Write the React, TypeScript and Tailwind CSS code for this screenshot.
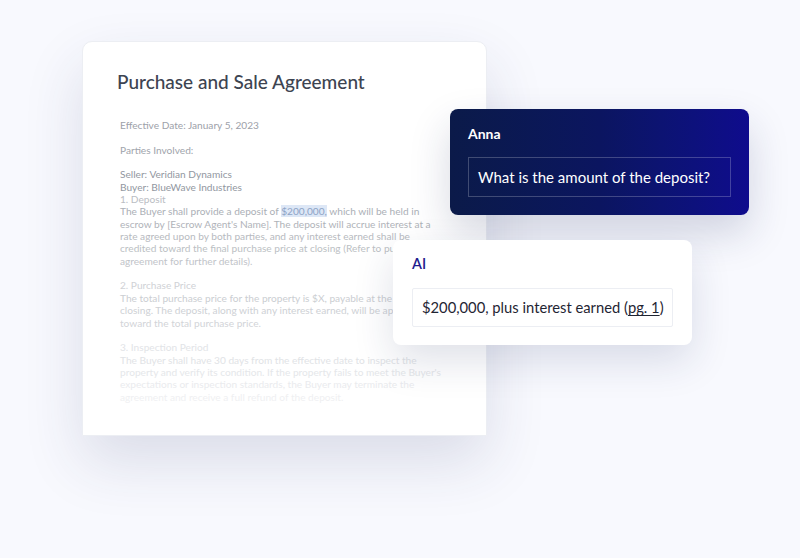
import React from "react";

function L({ c, children }: { c: string; children?: React.ReactNode }) {
  return <div className={`whitespace-nowrap h-[12.35px] ${c}`}>{children ?? "\u00a0"}</div>;
}

export default function App() {
  return (
    <div className="relative w-[800px] h-[558px] overflow-hidden bg-[#f8f9fe] pl-[82px] pt-[41px] font-['Lato',sans-serif]">
      {/* document */}
      <div className="w-[405px] h-[395px] bg-white rounded-t-[10px] border border-[#eceef3] shadow-[0_26px_60px_rgba(40,50,100,0.14)] pt-[28px]">
        <div className="pl-[34px] text-[19px] leading-[24px] text-[#3d4451] font-medium">
          Purchase and Sale Agreement
        </div>
        <div className="pl-[37px] pt-[25px] text-[10.15px] leading-[12.35px]">
          <L c="text-[#9da1a9]">Effective Date: January 5, 2023</L>
          <L c="" />
          <L c="text-[#a0a4ab]">Parties Involved:</L>
          <L c="" />
          <L c="text-[#92979f]">Seller: Veridian Dynamics</L>
          <L c="text-[#92979f]">Buyer: BlueWave Industries</L>
          <L c="text-[#babdc3]">1. Deposit</L>
          <L c="text-[#abafb6]">
            The Buyer shall provide a deposit of{" "}
            <span className="bg-[#dde7f6] text-[#8ea4c6]">$200,000,</span> which will be held in
          </L>
          <L c="text-[#b0b3b9]">escrow by [Escrow Agent's Name]. The deposit will accrue interest at a</L>
          <L c="text-[#b7bac0]">rate agreed upon by both parties, and any interest earned shall be</L>
          <L c="text-[#bcbfc4]">credited toward the final purchase price at closing (Refer to purchase</L>
          <L c="text-[#c1c4c9]">agreement for further details).</L>
          <L c="" />
          <L c="text-[#d0d2d6]">2. Purchase Price</L>
          <L c="text-[#cbced2]">The total purchase price for the property is $X, payable at the time of</L>
          <L c="text-[#ced1d5]">closing. The deposit, along with any interest earned, will be applied</L>
          <L c="text-[#d2d4d8]">toward the total purchase price.</L>
          <L c="" />
          <L c="text-[#e2e4e7]">3. Inspection Period</L>
          <L c="text-[#e1e3e6]">The Buyer shall have 30 days from the effective date to inspect the</L>
          <L c="text-[#e5e7ea]">property and verify its condition. If the property fails to meet the Buyer's</L>
          <L c="text-[#eaebee]">expectations or inspection standards, the Buyer may terminate the</L>
          <L c="text-[#eff0f2]">agreement and receive a full refund of the deposit.</L>
        </div>
      </div>

      {/* Anna card */}
      <div className="absolute left-[450px] top-[109px] w-[299px] h-[106px] rounded-[8px] bg-gradient-to-r from-[#0b1a49] via-[#0b1560] to-[#0f0b8d] shadow-[0_18px_40px_rgba(30,40,90,0.18)] px-[18px] pt-[15px]">
        <div className="text-[14px] leading-[20px] font-bold text-white">Anna</div>
        <div className="mt-[13px] h-[40px] border border-[rgba(255,255,255,0.22)] flex items-center pl-[9px] text-[15px] text-white">
          <span className="whitespace-nowrap">What is the amount of the deposit?</span>
        </div>
      </div>

      {/* AI card */}
      <div className="absolute left-[393px] top-[240px] w-[299px] h-[105px] rounded-[8px] bg-white shadow-[0_16px_40px_rgba(30,40,90,0.14)] px-[19px] pt-[14px]">
        <div className="text-[14.5px] leading-[20px] font-semibold text-[#1f1b8e]">AI</div>
        <div className="mt-[14px] h-[39px] w-[261px] rounded-[2px] border border-[#eceef3] flex items-center pl-[9px] text-[14.75px] text-[#1f2533]">
          <span className="whitespace-nowrap">
            $200,000, plus interest earned (<span className="underline underline-offset-2">pg. 1</span>)
          </span>
        </div>
      </div>
    </div>
  );
}
